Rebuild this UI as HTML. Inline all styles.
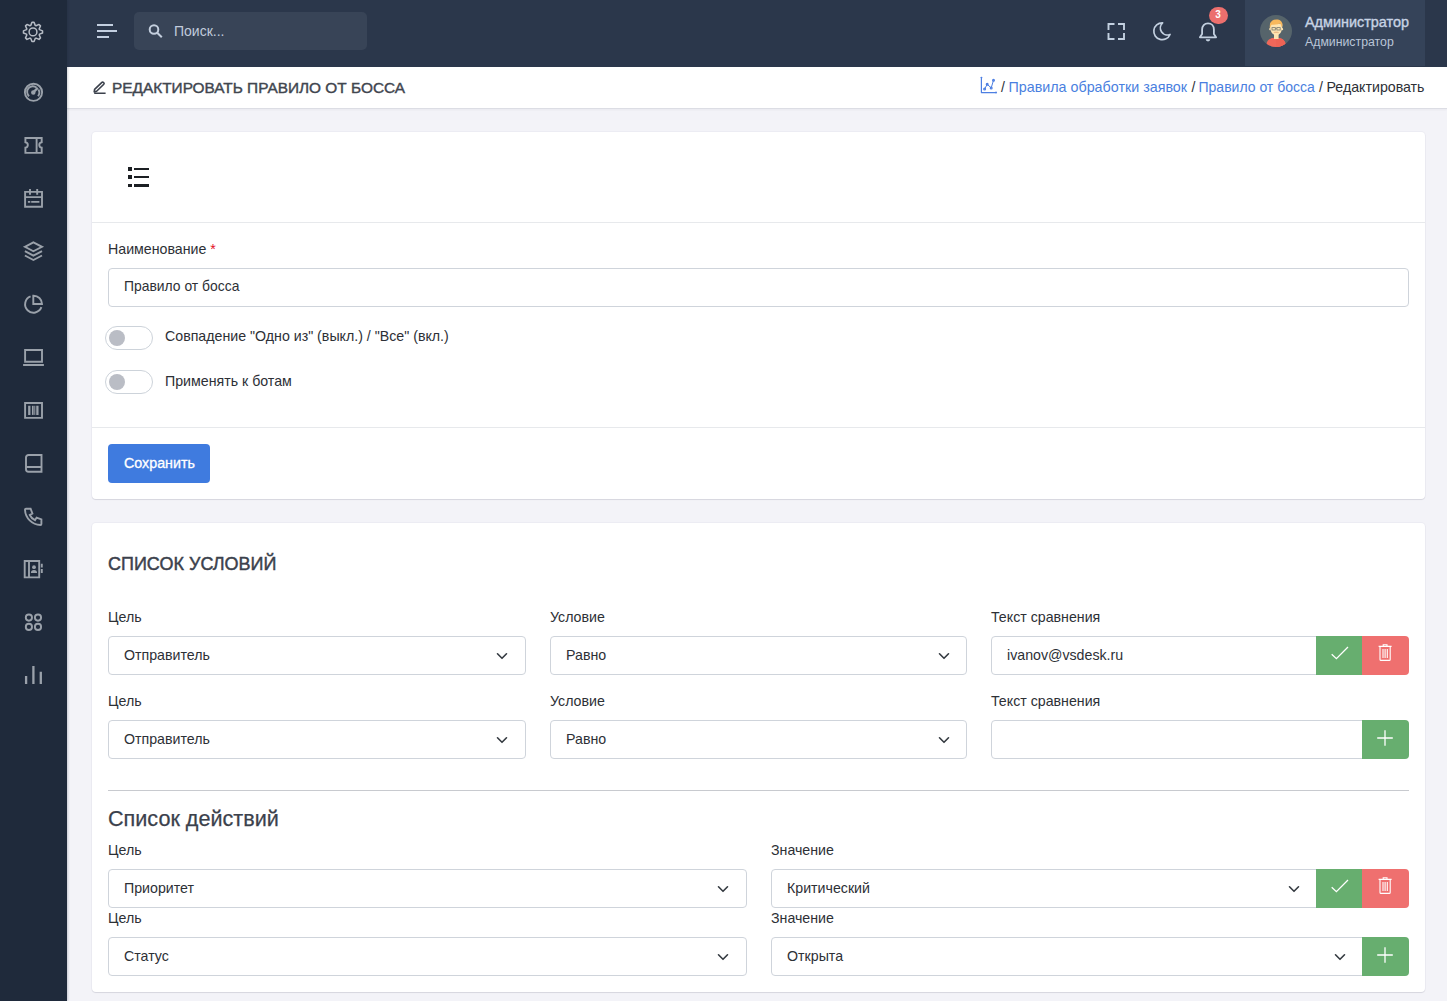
<!DOCTYPE html>
<html lang="ru"><head><meta charset="utf-8">
<style>
*{box-sizing:border-box;margin:0;padding:0}
html,body{width:1447px;height:1001px;overflow:hidden;background:#f3f3f8;font-family:"Liberation Sans",sans-serif;color:#2d3036}
div,span,svg{position:absolute}
.t{line-height:1;white-space:nowrap}
#sb{left:0;top:0;width:67px;height:1001px;background:#1f2a3b;box-shadow:1px 0 2px rgba(20,30,50,.2);z-index:2}
.si{left:18px;width:30px;height:30px;fill:none;stroke:#9aa1aa;stroke-width:1.9}
#hd{left:67px;top:0;width:1380px;height:67px;background:#2b374b}
#tb{left:67px;top:67px;width:1380px;height:42px;background:#fff;border-bottom:1px solid #dcdde4;box-shadow:0 1px 2px rgba(30,30,60,.05)}
.card{left:92px;width:1333px;background:#fff;border-radius:4px;box-shadow:0 0 0 1px rgba(40,40,80,.03),0 1px 1px rgba(20,20,50,.1)}
.lbl{font-size:14.2px;color:#2d3036}
.box{height:39px;border:1px solid #cfd4db;border-radius:4px;background:#fff}
.box .t{left:15px;top:11px;font-size:14.2px;color:#2d3036}
.chev{width:12px;height:8px;top:15px;fill:none;stroke:#343a40;stroke-width:1.6;stroke-linecap:round;stroke-linejoin:round}
.g{background:#67ae6f}
.r{background:#ef706f}
.bi{fill:none;stroke:#fff;stroke-width:1.2}
.tg{width:48px;height:24px;border:1px solid #cdd3da;border-radius:12px;background:#fff}
.tg::after{content:"";position:absolute;left:2.8px;top:2.8px;width:16.4px;height:16.4px;border-radius:50%;background:#babdc5}
</style></head><body>

<!-- SIDEBAR -->
<div id="sb">
<svg class="si" style="top:16px;stroke:#b6bcc5;stroke-width:1.5;stroke-linejoin:round" viewBox="0 0 30 30"><path d="M12.76 9.37 L13.95 6.36 L16.05 6.36 L17.24 9.37 L18.03 9.70 L21.00 8.41 L22.49 9.90 L21.20 12.87 L21.53 13.66 L24.54 14.85 L24.54 16.95 L21.53 18.14 L21.20 18.93 L22.49 21.90 L21.00 23.39 L18.03 22.10 L17.24 22.43 L16.05 25.44 L13.95 25.44 L12.76 22.43 L11.97 22.10 L9.00 23.39 L7.51 21.90 L8.80 18.93 L8.47 18.14 L5.46 16.95 L5.46 14.85 L8.47 13.66 L8.80 12.87 L7.51 9.90 L9.00 8.41 L11.97 9.70Z"/><circle cx="15" cy="15.9" r="3.9"/></svg>
<svg class="si" style="top:77px" viewBox="0 0 30 30"><circle cx="15.5" cy="15.3" r="8.6"/><path d="M11.1 19.2 A5.6 5.6 0 0 1 18.6 10.6 M20.4 12.6 A5.6 5.6 0 0 1 20 19.2"/><path d="M15.3 15.4 L19.8 10.9" stroke-width="2.2"/><circle cx="15.3" cy="15.4" r="1.3" fill="#9aa1aa"/></svg>
<svg class="si" style="top:130px" viewBox="0 0 30 30"><path d="M7.4 8 H23.7 V12.3 A3 2.7 0 0 0 23.7 17.6 V22.9 H7.4 V17.6 A3 2.7 0 0 0 7.4 12.3 Z M18.6 8 V22.9"/></svg>
<svg class="si" style="top:183px" viewBox="0 0 30 30"><path d="M7.1 8.9 H24 V23.7 H7.1 Z M7.1 14.1 H24 M12 6 V11.7 M19.2 6 V11.7 M9.9 18.9 H12.3 M13.2 18.9 H21.4"/></svg>
<svg class="si" style="top:236px" viewBox="0 0 30 30"><path d="M6.9 10.8 L15.4 6.4 L24 10.8 L15.4 15.3 Z M6.9 15.1 L15.4 19.7 L24 15.1 M6.9 19.5 L15.4 24 L24 19.5"/></svg>
<svg class="si" style="top:289px" viewBox="0 0 30 30"><path d="M12.6 7.4 A8.4 8.4 0 1 0 23.4 18.2 M15.3 6.7 V15 H24 A8.4 8.4 0 0 0 15.3 6.7 Z"/></svg>
<svg class="si" style="top:342px" viewBox="0 0 30 30"><path d="M7.1 8 H24 V19.8 H7.1 Z M5.1 23 H25.9"/></svg>
<svg class="si" style="top:395px" viewBox="0 0 30 30"><path d="M7.1 8 H24 V22.9 H7.1 Z"/><path d="M11.3 10.8 V19.9 M19.4 10.8 V19.9" stroke-width="2.3"/><path d="M14.8 10.8 V19.9" stroke-width="1.7"/><path d="M16.8 10.8 V19.9" stroke-width="1"/></svg>
<svg class="si" style="top:448px" viewBox="0 0 30 30"><path d="M23.5 7 H10.5 A2.5 2.5 0 0 0 8 9.5 V21.2 A2.5 2.5 0 0 0 10.5 23.7 H23.5 Z M8 19 H23.5"/></svg>
<svg class="si" style="top:501px" viewBox="0 0 30 30"><path d="M8 7.7 H12.6 L14.4 12.5 L11.8 14 A10.5 10.5 0 0 0 17 19.2 L18.6 16.6 L23.4 18.4 V23 A1 1 0 0 1 22.4 24 A16 16 0 0 1 7 8.7 A1 1 0 0 1 8 7.7 Z"/></svg>
<svg class="si" style="top:554px" viewBox="0 0 30 30"><path d="M6.7 7 H21.2 V23.4 H6.7 Z M11 7 V23.4 M23.8 9.7 V13.5 M23.8 15.1 V18.9"/><circle cx="16" cy="13.2" r="1.9" fill="#9aa1aa" stroke="none"/><path d="M12.9 18.9 A3.1 2.9 0 0 1 19.1 18.9 Z" fill="#9aa1aa" stroke="none"/></svg>
<svg class="si" style="top:607px" viewBox="0 0 30 30"><circle cx="10.9" cy="10.6" r="3.1"/><circle cx="20" cy="10.6" r="3.1"/><circle cx="10.9" cy="19.9" r="3.1"/><circle cx="20" cy="19.9" r="3.1"/></svg>
<svg class="si" style="top:660px;stroke-width:2.3" viewBox="0 0 30 30"><path d="M8.1 15.9 V24 M15.4 6.1 V24 M22.8 11.8 V24"/></svg>
</div>

<!-- HEADER -->
<div id="hd"></div>
<svg style="left:95px;top:22px;width:25px;height:18px" viewBox="0 0 25 18"><path d="M2 3 H18 M2 9 H22 M2 15 H14" stroke="#c3cfe0" stroke-width="2"/></svg>
<div style="left:134px;top:12px;width:233px;height:38px;background:#384457;border-radius:5px"></div>
<svg style="left:145px;top:21px;width:22px;height:22px" viewBox="0 0 22 22"><circle cx="9" cy="8.5" r="4.3" fill="none" stroke="#c3cedd" stroke-width="2"/><path d="M12.2 11.7 L16.8 16.3" stroke="#c3cedd" stroke-width="2"/></svg>
<span class="t" style="left:174px;top:24px;font-size:14px;color:#c1cbdc">Поиск...</span>

<svg style="left:1104px;top:20px;width:24px;height:24px" viewBox="0 0 24 24" fill="none" stroke="#c3d0e0" stroke-width="1.9"><path d="M4.5 10 V4 H10.5 M14 4 H20 V10 M20 13 V19 H14 M10.5 19 H4.5 V13"/></svg>
<svg style="left:1151px;top:20px;width:22.5px;height:22.5px" viewBox="0 0 24 24" fill="none" stroke="#c3d0e0" stroke-width="1.8" stroke-linejoin="round"><path d="M12 3c.132 0 .263 0 .393 0a7.5 7.5 0 0 0 7.92 12.446a9 9 0 1 1 -8.313 -12.454z"/></svg>
<svg style="left:1196px;top:19.8px;width:24px;height:24px" viewBox="0 0 24 24" fill="none" stroke="#c3d0e0" stroke-width="1.8" stroke-linejoin="round"><path d="M12 3.4 C8.4 3.4 6.1 6 6.1 9.6 V14 L3.9 17.3 H20.1 L17.9 14 V9.6 C17.9 6 15.6 3.4 12 3.4 Z"/><path d="M9.7 19.3 A2.3 2.1 0 0 0 14.3 19.3 Z" fill="#c3d0e0" stroke="none"/></svg>
<div style="left:1209px;top:6.5px;width:18.5px;height:17.5px;border-radius:50%;background:#ec6f6d"></div>
<span class="t" style="left:1215px;top:9.2px;font-size:10.5px;font-weight:700;color:#fff;transform:scaleX(.95)">3</span>

<div style="left:1245px;top:0;width:180px;height:66px;background:#354359"></div>
<svg style="left:1260px;top:15px;width:32px;height:32px" viewBox="0 0 32 32">
<defs><clipPath id="av"><circle cx="16" cy="16" r="16"/></clipPath></defs>
<circle cx="16" cy="16" r="16" fill="#56646b"/>
<g clip-path="url(#av)">
<path d="M6.2 32 C6.2 25.5 9 22.8 16 22.8 C23 22.8 25.8 25.5 25.8 32 Z" fill="#f0675a"/>
<path d="M16 22.8 C23 22.8 25.8 25.5 25.8 32 H16 Z" fill="#ee6355"/>
<rect x="14" y="18.5" width="4.6" height="5.5" fill="#fbe2b0"/>
<path d="M10 8.5 V11 C10 16.5 12.5 20.2 16.2 20.2 C19.9 20.2 22.3 16.5 22.3 11 V8.5 Z" fill="#fde4b2"/>
<ellipse cx="9.9" cy="14.2" rx=".7" ry="1.1" fill="#fde4b2"/><ellipse cx="22.4" cy="14.2" rx=".7" ry="1.1" fill="#fde4b2"/>
<path d="M9.8 13 C9.4 7.5 11.5 4.6 16.3 4.6 C20.5 4.6 22.6 6.8 22.4 10.8 L21.7 12.2 C21.3 9.6 20.4 8.6 19.6 8.4 C17.5 9.6 14 9.4 11.6 9.8 C11 10.6 10.6 11.6 9.8 13 Z" fill="#f8b85c"/>
<rect x="12" y="12.6" width="3.3" height="2.4" fill="none" stroke="#77786f" stroke-width=".8"/>
<rect x="16.9" y="12.6" width="3.3" height="2.4" fill="none" stroke="#77786f" stroke-width=".8"/>
<path d="M15.3 13.4 H16.9" stroke="#77786f" stroke-width=".6"/>
<path d="M13.8 17.6 C15 16.7 17.4 16.7 18.6 17.6 C17.4 17.5 15 17.5 13.8 17.6 Z" fill="#e6b27e" stroke="#e6b27e" stroke-width=".6"/>
</g></svg>
<span class="t" style="left:1305px;top:15.3px;font-size:14px;-webkit-text-stroke:.35px #c7d3e4;color:#c7d3e4;transform:scaleX(1.03);transform-origin:0 0">Администратор</span>
<span class="t" style="left:1305px;top:36px;font-size:12.3px;color:#bac6d8">Администратор</span>

<!-- TITLE BAR -->
<div id="tb"></div>
<svg style="left:90px;top:78px;width:18px;height:18px" viewBox="0 0 18 18" fill="none" stroke="#3b414c" stroke-width="1.6" stroke-linejoin="round"><path d="M4.6 11.4 L11.9 4.4 A1 1 0 0 1 13.3 4.4 L13.8 4.9 A1 1 0 0 1 13.8 6.3 L6.6 13.3 L4.2 13.8 Z M4.2 15.3 H15.6"/></svg>
<span class="t" style="left:111.5px;top:80.6px;font-size:14.8px;-webkit-text-stroke:.4px #41464f;color:#41464f;transform:scaleX(1.04);transform-origin:0 0">РЕДАКТИРОВАТЬ ПРАВИЛО ОТ БОССА</span>

<svg style="left:978px;top:74px;width:22px;height:22px" viewBox="0 0 22 22" fill="none" stroke="#4d7fe2" stroke-width="1.2" stroke-linejoin="round"><path d="M3.4 3.3 V18.6 H18.5 M2.6 4.2 L3.4 3.3 L4.2 4.2 M17.6 17.8 L18.5 18.6 L17.6 19.4"/><path d="M6.6 15 L9.2 10.3 L13.2 13.9 L15.5 6.3" stroke-width="1"/><circle cx="6.6" cy="15" r=".9"/><circle cx="9.2" cy="10.3" r=".9"/><circle cx="13.2" cy="13.9" r=".9"/><circle cx="15.5" cy="6.3" r=".9"/></svg>
<span class="t" style="left:1001px;top:80px;font-size:14px;color:#2d3036">/</span>
<span class="t" style="left:1008.5px;top:80px;font-size:14.3px;color:#4a7fe0">Правила обработки заявок</span>
<span class="t" style="left:1191.5px;top:80px;font-size:14px;color:#2d3036">/</span>
<span class="t" style="left:1198.5px;top:80px;font-size:14px;color:#4a7fe0">Правило от босса</span>
<span class="t" style="left:1319px;top:80px;font-size:14px;color:#2d3036">/</span>
<span class="t" style="left:1326.5px;top:80px;font-size:14.2px;color:#2d3036">Редактировать</span>

<!-- CARD 1 -->
<div class="card" style="top:132px;height:367px">
  <div style="left:0;top:90px;width:1333px;height:1px;background:#e7e9ec"></div>
  <div style="left:36px;top:35px;width:4px;height:3.6px;background:#1c1f23"></div>
  <div style="left:42px;top:36px;width:15px;height:2.2px;background:#1c1f23"></div>
  <div style="left:36px;top:43.2px;width:4px;height:3.6px;background:#1c1f23"></div>
  <div style="left:42px;top:44.1px;width:15px;height:2.2px;background:#1c1f23"></div>
  <div style="left:36px;top:51.8px;width:4px;height:3.4px;background:#1c1f23"></div>
  <div style="left:42px;top:52.3px;width:15px;height:2.4px;background:#1c1f23"></div>

  <span class="t lbl" style="left:16px;top:110.2px">Наименование <span style="position:static;color:#e3101f">*</span></span>
  <div class="box" style="left:16px;top:136px;width:1301px"><span class="t" style="font-size:13.9px;top:11.4px">Правило от босса</span></div>

  <div class="tg" style="left:13px;top:194px"></div>
  <span class="t lbl" style="left:73px;top:197.4px">Совпадение "Одно из" (выкл.) / "Все" (вкл.)</span>
  <div class="tg" style="left:13px;top:238px"></div>
  <span class="t lbl" style="left:73px;top:241.6px">Применять к ботам</span>

  <div style="left:0;top:295px;width:1333px;height:1px;background:#e7e9ec"></div>
  <div style="left:16px;top:312px;width:102px;height:39px;background:#3f7bdf;border-radius:4px"></div>
  <span class="t" style="left:31.5px;top:324.4px;font-size:14px;-webkit-text-stroke:.3px #fff;color:#fff;transform:scaleX(1.02);transform-origin:0 0">Сохранить</span>
</div>

<!-- CARD 2 -->
<div class="card" style="top:523px;height:469px">
  <span class="t" style="left:16px;top:32px;font-size:18.6px;-webkit-text-stroke:.45px #3b414c;color:#3b414c;transform:scaleX(.968);transform-origin:0 0">СПИСОК УСЛОВИЙ</span>

  <span class="t lbl" style="left:16px;top:87.2px">Цель</span>
  <span class="t lbl" style="left:458px;top:87.2px">Условие</span>
  <span class="t lbl" style="left:899px;top:87.2px">Текст сравнения</span>
  <div class="box" style="left:16px;top:113px;width:418px"><span class="t">Отправитель</span><svg class="chev" style="left:387px" viewBox="0 0 12 8"><path d="M1.5 1.8 L6 6.3 L10.5 1.8"/></svg></div>
  <div class="box" style="left:458px;top:113px;width:417px"><span class="t">Равно</span><svg class="chev" style="left:387px" viewBox="0 0 12 8"><path d="M1.5 1.8 L6 6.3 L10.5 1.8"/></svg></div>
  <div class="box" style="left:899px;top:113px;width:330px;border-radius:4px 0 0 4px"><span class="t">ivanov@vsdesk.ru</span></div>
  <div class="g" style="left:1224px;top:113px;width:46px;height:39px"></div>
  <svg class="bi" style="left:1235px;top:119px;width:24px;height:24px" viewBox="0 0 24 24"><path d="M4.7 12.3 L9.4 16.7 L21 5" stroke-width="1.3"/></svg>
  <div class="r" style="left:1270px;top:113px;width:47px;height:39px;border-radius:0 4px 4px 0"></div>
  <svg class="bi" style="left:1281px;top:116px;width:24px;height:24px" viewBox="0 0 24 24"><path d="M5.6 7.4 H18.6 M10.2 7.2 V5.8 H14 V7.2 M7 7.6 V20.4 A1 1 0 0 0 8 21.4 H16.2 A1 1 0 0 0 17.2 20.4 V7.6 M10 10 V19 M12.1 10 V19 M14.3 10 V19" stroke-width="1.1"/></svg>

  <span class="t lbl" style="left:16px;top:171px">Цель</span>
  <span class="t lbl" style="left:458px;top:171px">Условие</span>
  <span class="t lbl" style="left:899px;top:171px">Текст сравнения</span>
  <div class="box" style="left:16px;top:197px;width:418px"><span class="t">Отправитель</span><svg class="chev" style="left:387px" viewBox="0 0 12 8"><path d="M1.5 1.8 L6 6.3 L10.5 1.8"/></svg></div>
  <div class="box" style="left:458px;top:197px;width:417px"><span class="t">Равно</span><svg class="chev" style="left:387px" viewBox="0 0 12 8"><path d="M1.5 1.8 L6 6.3 L10.5 1.8"/></svg></div>
  <div class="box" style="left:899px;top:197px;width:376px;border-radius:4px 0 0 4px"></div>
  <div class="g" style="left:1270px;top:197px;width:47px;height:39px;border-radius:0 4px 4px 0"></div>
  <svg class="bi" style="left:1283px;top:204.5px;width:20px;height:20px" viewBox="0 0 20 20"><path d="M2.2 10 H17.8 M10 2.2 V17.8" stroke-width="1.3"/></svg>

  <div style="left:16px;top:266.5px;width:1301px;height:1px;background:#c8cacf"></div>
  <span class="t" style="left:16px;top:284.6px;font-size:21.6px;-webkit-text-stroke:.25px #3b414c;color:#3b414c">Список действий</span>

  <span class="t lbl" style="left:16px;top:320.1px">Цель</span>
  <span class="t lbl" style="left:679px;top:320.1px">Значение</span>
  <div class="box" style="left:16px;top:346px;width:639px"><span class="t">Приоритет</span><svg class="chev" style="left:608px" viewBox="0 0 12 8"><path d="M1.5 1.8 L6 6.3 L10.5 1.8"/></svg></div>
  <div class="box" style="left:679px;top:346px;width:550px;border-radius:4px 0 0 4px"><span class="t">Критический</span><svg class="chev" style="left:516px" viewBox="0 0 12 8"><path d="M1.5 1.8 L6 6.3 L10.5 1.8"/></svg></div>
  <div class="g" style="left:1224px;top:346px;width:46px;height:39px"></div>
  <svg class="bi" style="left:1235px;top:352px;width:24px;height:24px" viewBox="0 0 24 24"><path d="M4.7 12.3 L9.4 16.7 L21 5" stroke-width="1.3"/></svg>
  <div class="r" style="left:1270px;top:346px;width:47px;height:39px;border-radius:0 4px 4px 0"></div>
  <svg class="bi" style="left:1281px;top:349px;width:24px;height:24px" viewBox="0 0 24 24"><path d="M5.6 7.4 H18.6 M10.2 7.2 V5.8 H14 V7.2 M7 7.6 V20.4 A1 1 0 0 0 8 21.4 H16.2 A1 1 0 0 0 17.2 20.4 V7.6 M10 10 V19 M12.1 10 V19 M14.3 10 V19" stroke-width="1.1"/></svg>

  <span class="t lbl" style="left:16px;top:388.1px">Цель</span>
  <span class="t lbl" style="left:679px;top:388.1px">Значение</span>
  <div class="box" style="left:16px;top:414px;width:639px"><span class="t">Статус</span><svg class="chev" style="left:608px" viewBox="0 0 12 8"><path d="M1.5 1.8 L6 6.3 L10.5 1.8"/></svg></div>
  <div class="box" style="left:679px;top:414px;width:596px;border-radius:4px 0 0 4px"><span class="t">Открыта</span><svg class="chev" style="left:562px" viewBox="0 0 12 8"><path d="M1.5 1.8 L6 6.3 L10.5 1.8"/></svg></div>
  <div class="g" style="left:1270px;top:414px;width:47px;height:39px;border-radius:0 4px 4px 0"></div>
  <svg class="bi" style="left:1283px;top:421.5px;width:20px;height:20px" viewBox="0 0 20 20"><path d="M2.2 10 H17.8 M10 2.2 V17.8" stroke-width="1.3"/></svg>
</div>
</body></html>
